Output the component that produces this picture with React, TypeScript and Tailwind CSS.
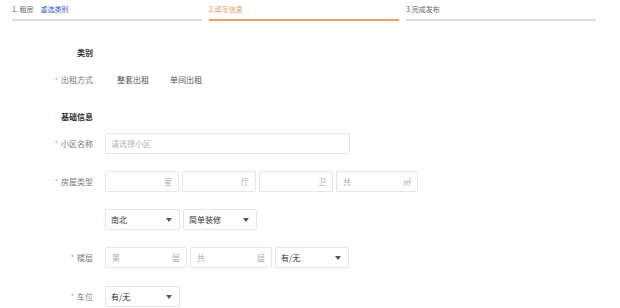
import type { ReactNode } from "react";

const font = { fontFamily: '"Noto Sans CJK SC", "Noto Sans", sans-serif' };

function Caret() {
  return (
    <svg width="6" height="4" viewBox="0 0 6 4" className="shrink-0">
      <path d="M0 0h6L3 4z" fill="#555" />
    </svg>
  );
}

function Label({ text, required = true }: { text: string; required?: boolean }) {
  return (
    <div className="w-[93px] shrink-0 flex items-center justify-end gap-[3px] text-[8px] text-[#777]">
      {required && <span className="text-[#e77a7a] text-[7px] leading-none">*</span>}
      <span>{text}</span>
    </div>
  );
}

function Row({ label, children, className = "" }: { label?: string; children: ReactNode; className?: string }) {
  return (
    <div className={`flex items-center gap-[12px] ${className}`}>
      {label ? <Label text={label} /> : <div className="w-[93px] shrink-0" />}
      <div className="flex items-center gap-[3px]">{children}</div>
    </div>
  );
}

function Box({ w, left, right }: { w: string; left?: string; right?: string }) {
  return (
    <div
      className={`${w} h-[21px] border border-[#e6e6e6] rounded-[2px] bg-white flex items-center justify-between px-[6px] text-[8px] text-[#aaa]`}
    >
      <span>{left}</span>
      <span>{right}</span>
    </div>
  );
}

function Select({ w, value }: { w: string; value: string }) {
  return (
    <div
      className={`${w} h-[21px] border border-[#e6e6e6] rounded-[2px] bg-white flex items-center justify-between pl-[5px] pr-[7px] text-[8px] text-[#333]`}
    >
      <span>{value}</span>
      <Caret />
    </div>
  );
}

const steps = [
  { title: "1. 租房", link: "重选类别", active: false },
  { title: "2.填写信息", active: true },
  { title: "3.完成发布", active: false },
];

export default function App() {
  return (
    <div className="w-[620px] h-[308px] bg-white overflow-hidden" style={font}>
      {/* step bar */}
      <div className="flex gap-[7px] px-[12px] pt-[3px]">
        {steps.map((s) => (
          <div key={s.title} className="w-[190px]">
            <div className={`h-[13px] flex items-center gap-[7px] text-[7px] ${s.active ? "text-[#e39a52]" : "text-[#666]"}`}>
              <span>{s.title}</span>
              {s.link && <span className="text-[#3d5ad1]">{s.link}</span>}
            </div>
            <div className={`mt-[3px] h-[2px] ${s.active ? "bg-[#e3a263]" : "bg-[#dcdcdc]"}`} />
          </div>
        ))}
      </div>

      {/* 类别 */}
      <div className="mt-[26px] w-[93px] text-right text-[8px] font-bold text-[#333] leading-[12px]">类别</div>
      <Row label="出租方式" className="mt-[15px] h-[12px]">
        <div className="ml-[12px] flex gap-[21px] text-[8px] text-[#555]">
          <span>整套出租</span>
          <span>单间出租</span>
        </div>
      </Row>

      {/* 基础信息 */}
      <div className="mt-[25px] w-[93px] text-right text-[8px] font-bold text-[#333] leading-[12px]">基础信息</div>

      <Row label="小区名称" className="mt-[10px]">
        <div className="w-[245px] h-[21px] border border-[#e6e6e6] rounded-[2px] flex items-center px-[5px] text-[8px] text-[#b5b5b5]">
          请选择小区
        </div>
      </Row>

      <Row label="房屋类型" className="mt-[17px]">
        <Box w="w-[74px]" right="室" />
        <Box w="w-[74px]" right="厅" />
        <Box w="w-[74px]" right="卫" />
        <Box w="w-[82px]" left="共" right="㎡" />
      </Row>

      <Row className="mt-[17px]">
        <Select w="w-[75px]" value="南北" />
        <Select w="w-[74px]" value="简单装修" />
      </Row>

      <Row label="楼层" className="mt-[17px]">
        <Box w="w-[82px]" left="第" right="层" />
        <Box w="w-[82px]" left="共" right="层" />
        <Select w="w-[74px]" value="有/无" />
      </Row>

      <Row label="车位" className="mt-[18px]">
        <Select w="w-[75px]" value="有/无" />
      </Row>
    </div>
  );
}
